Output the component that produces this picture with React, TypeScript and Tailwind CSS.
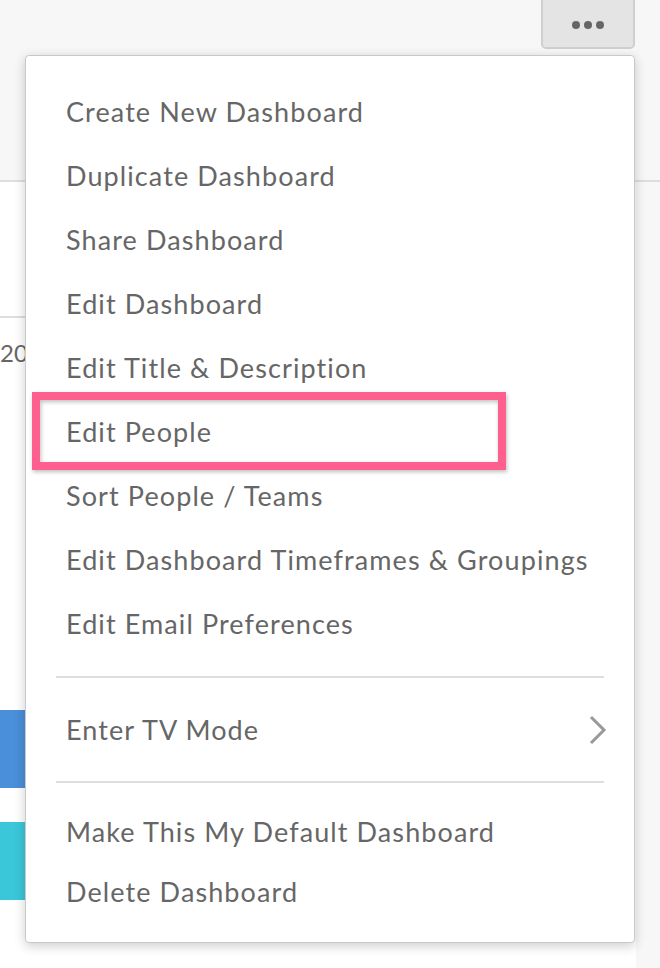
import React from "react";

const font = { fontFamily: "Lato, 'Open Sans', sans-serif" };

function Item({ label, h = "h-[64px]" }: { label: string; h?: string }) {
  return (
    <div className={`${h} flex items-center pl-[40px] text-[27px] text-[#666] tracking-[1.1px]`}>
      {label}
    </div>
  );
}

export default function App() {
  const top = [
    "Create New Dashboard",
    "Duplicate Dashboard",
    "Share Dashboard",
    "Edit Dashboard",
    "Edit Title & Description",
    "Edit People",
    "Sort People / Teams",
    "Edit Dashboard Timeframes & Groupings",
    "Edit Email Preferences",
  ];
  return (
    <div className="relative w-[660px] h-[968px] overflow-hidden bg-white" style={font}>
      {/* page background */}
      <div className="flex flex-col h-full">
        <div className="h-[182px] shrink-0 bg-[#f7f7f7] border-b-2 border-[#dedede] flex justify-end pr-[25px]">
          <div className="w-[94px] h-[53px] -mt-[4px] pt-[4px] bg-[#e4e4e4] border-2 border-[#cfcfcf] rounded-[5px] flex items-center justify-center gap-[4px]">
            <span className="w-[8px] h-[8px] rounded-full bg-[#666]" />
            <span className="w-[8px] h-[8px] rounded-full bg-[#666]" />
            <span className="w-[8px] h-[8px] rounded-full bg-[#666]" />
          </div>
        </div>
        <div className="flex-1 flex">
          <div className="w-[25px] shrink-0 flex flex-col">
            <div className="h-[136px] shrink-0 border-b-2 border-[#dedede]" />
            <div className="mt-[20px] text-[24px] text-[#666] leading-[30px] whitespace-nowrap">20</div>
            <div className="mt-[342px] h-[78px] bg-[#4a8fd9]" />
            <div className="mt-[34px] h-[78px] bg-[#3ac7da]" />
          </div>
          <div className="flex-1" />
          <div className="w-[24px] shrink-0 bg-[#f7f7f7]" />
        </div>
      </div>

      {/* dropdown menu */}
      <div className="absolute left-[25px] top-[55px] w-[610px] h-[888px] bg-white border border-[#c9c9c9] rounded-[4px] shadow-[0_3px_12px_rgba(0,0,0,0.2)] flex flex-col pt-[24px]">
        {top.map((t) => (
          <Item key={t} label={t} />
        ))}
        <div className="mt-[20px] mx-[30px] h-[2px] bg-[#dedede]" />
        <div className="mt-[20px] h-[64px] flex items-center justify-between pl-[40px] pr-[26px] text-[27px] text-[#666] tracking-[1.1px]">
          <span>Enter TV Mode</span>
          <svg width="20" height="30" viewBox="0 0 20 30" fill="none">
            <path d="M3 2 L16 15 L3 28" stroke="#999" strokeWidth="3" />
          </svg>
        </div>
        <div className="mt-[19px] mx-[30px] h-[2px] bg-[#dedede]" />
        <div className="mt-[19px]" />
        <Item label="Make This My Default Dashboard" h="h-[60px]" />
        <Item label="Delete Dashboard" h="h-[60px]" />
      </div>

      {/* annotation highlight */}
      <div className="absolute left-[32px] top-[392px] w-[474px] h-[78px] border-[8px] border-[#ff5f8f] shadow-[1px_2px_4px_rgba(0,0,0,0.25),inset_1px_2px_4px_rgba(0,0,0,0.25)]" />
    </div>
  );
}
